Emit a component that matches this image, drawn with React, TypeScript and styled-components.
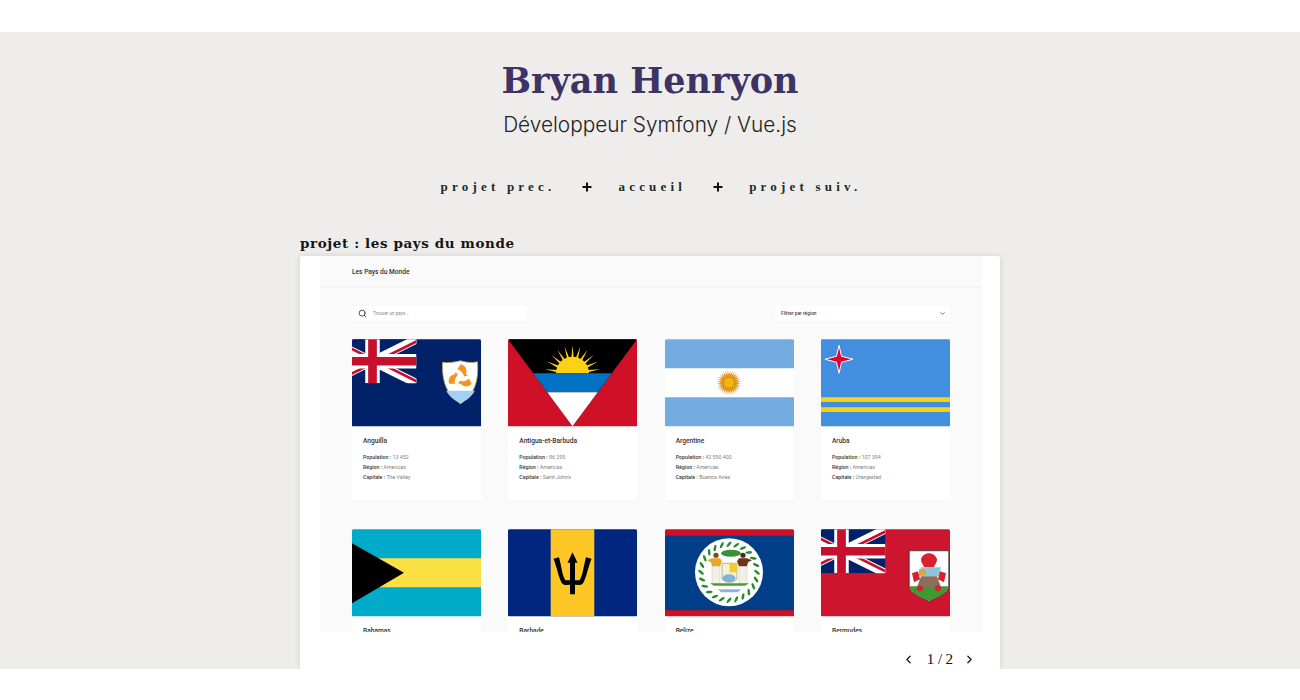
import React from "react";
import styled, { createGlobalStyle } from "styled-components";
import { Search, ChevronDown, ChevronLeft, ChevronRight } from "lucide-react";

const Global = createGlobalStyle`
  html, body { margin: 0; padding: 0; background: #fff; height: 700px; overflow: hidden; }
  * { box-sizing: border-box; }
`;

const Page = styled.main`
  margin-top: 32px;
  height: 637px;
  background: #efedec;
  overflow: hidden;
  display: flex;
  flex-direction: column;
  align-items: center;
`;
const Title = styled.h1`
  margin: 26px 0 0;
  font: 700 35px/46px "DejaVu Serif", serif;
  color: #3d3364;
`;
const Subtitle = styled.h2`
  margin: 7px 0 0;
  font: 300 20.8px/28px Inter, sans-serif;
  color: #222;
`;
const Nav = styled.nav`
  margin-top: 38px;
  padding-left: 3px;
  display: flex;
  align-items: center;
  gap: 26px;
  height: 20px;
`;
const NavLink = styled.a`
  font: 700 13px/20px "Liberation Serif", serif;
  letter-spacing: 4.2px;
  color: #1d2a26;
  margin-right: 1px;
`;
const Plus = styled.span`
  width: 10px;
  height: 10px;
  color: #111;
  display: block;
`;
const Section = styled.section`
  width: 700px;
  margin-top: 36px;
  flex: 1;
  display: flex;
  flex-direction: column;
`;
const SectionTitle = styled.h3`
  margin: 0;
  font: 700 13.5px/20px "DejaVu Serif", serif;
  letter-spacing: 0.6px;
  color: #151515;
  white-space: nowrap;
  height: 23px;
`;
const Slide = styled.div`
  flex: 1;
  background: #fff;
  border-radius: 2px;
  box-shadow: 0 0 6px rgba(0, 0, 0, 0.12);
  padding-left: 20px;
  display: flex;
  flex-direction: column;
  min-height: 0;
`;
const Shot = styled.div`
  width: 662px;
  height: 376px;
  background: #fafafa;
  overflow: hidden;
  font-family: Roboto, sans-serif;
`;
const ShotHeader = styled.header`
  height: 32px;
  padding: 2px 32px 0;
  border-bottom: 2px solid #f4f4f4;
  display: flex;
  align-items: center;
  font: 500 6.6px/1 Roboto, sans-serif;
  color: #333;
`;
const Controls = styled.div`
  display: flex;
  justify-content: space-between;
  padding: 18px 32px 0;
`;
const Field = styled.div`
  width: 175px;
  height: 15px;
  background: #fff;
  display: flex;
  align-items: center;
  box-shadow: 0 1px 2px rgba(0, 0, 0, 0.02);
`;
const SearchBox = styled(Field)`
  padding-left: 6px;
  gap: 6px;
  color: #444;
  font: 400 4.6px/1 Roboto, sans-serif;
  & > span { color: #8a8a8a; padding-top: 1.5px; }
`;
const SelectBox = styled(Field)`
  padding: 0 4px 0 6px;
  justify-content: space-between;
  color: #444;
  font: 500 4.8px/1 Roboto, sans-serif;
  & > span { padding-top: 1.5px; }
`;
const Grid = styled.div`
  display: grid;
  grid-template-columns: repeat(4, 129px);
  justify-content: space-between;
  row-gap: 29px;
  padding: 18px 32px 0;
`;
const Card = styled.article`
  height: 161px;
  background: #fff;
  box-shadow: 0 1px 2px rgba(0, 0, 0, 0.02);
`;
const FlagBox = styled.svg`
  display: block;
  width: 129px;
  height: 87.5px;
  border-radius: 1.5px;
`;
const CardBody = styled.div`
  padding: 10px 11px 0;
`;
const CardName = styled.h4`
  margin: 0 0 6px;
  font: 500 6.6px/9px Roboto, sans-serif;
  color: #333;
`;
const Line = styled.p`
  margin: 0;
  font: 400 5.3px/10.1px Roboto, sans-serif;
  color: #808080;
  & > b { font-weight: 500; color: #3a3a3a; }
`;
const Pager = styled.div`
  height: 37px;
  display: flex;
  align-items: center;
  justify-content: flex-end;
  gap: 9px;
  padding-right: 24px;
  padding-top: 17px;
  color: #18213a;
`;
const PagerText = styled.span`
  font: 400 15px/20px "Liberation Serif", serif;
  letter-spacing: 0.9px;
  word-spacing: -2px;
  margin-left: 3px;
  color: #111;
`;

const UnionJack = () => (
  <svg x="0" y="0" width="64.5" height="44" viewBox="0 0 64.5 44">
    <rect width="64.5" height="44" fill="#012169" />
    <path d="M-24 0L64.500 44M64.500 0L-24 44" stroke="#fff" strokeWidth="8.500" />
    <path d="M-24 -2.200L64.500 42M64.500 2.200L-24 46.200" stroke="#c8102e" strokeWidth="2.600" />
    <path d="M20.500 0V44M-24 22H64.500" stroke="#fff" strokeWidth="14.500" />
    <path d="M20.500 0V44M-24 22H64.500" stroke="#c8102e" strokeWidth="8.700" />
  </svg>
);

const dolphin = "M0 -13C5 -12 7 -8 5.500 -3L7.500 -1.500 3.500 -1C2.500 -5 0 -7 -3 -8Z";

const Anguilla = () => (
  <FlagBox viewBox="0 0 129 87">
    <rect width="129" height="87" fill="#012169" />
    <UnionJack />
    <path d="M90.500 23C96 24 102 23 108.500 21.500 114 23 120 24 125.500 22.500 126.500 40 124 54 108.500 64.500 93 54 90 40 90.500 23Z" fill="#fff" stroke="#b9a84a" strokeWidth="0.800" />
    <path d="M94.200 51.500H122.800C120 57 115 61 108.500 64 102 61 97 57 94.200 51.500Z" fill="#a5d0f5" />
    <g fill="#f7941d" transform="translate(108.500 38)">
      <path d={dolphin} />
      <path d={dolphin} transform="rotate(120)" />
      <path d={dolphin} transform="rotate(240)" />
    </g>
  </FlagBox>
);

const sunRays = (cx: number, cy: number, inner: number, outer: number, n: number, start = 0, end = 360) => {
  const out: string[] = [];
  const step = (end - start) / n;
  for (let i = 0; i < n; i++) {
    const a = ((start + step * i) * Math.PI) / 180;
    const b = ((start + step * (i + 0.5)) * Math.PI) / 180;
    const c = ((start + step * (i + 1)) * Math.PI) / 180;
    out.push(
      `M${cx + inner * Math.cos(a)} ${cy + inner * Math.sin(a)}L${cx + outer * Math.cos(b)} ${cy + outer * Math.sin(b)}L${cx + inner * Math.cos(c)} ${cy + inner * Math.sin(c)}Z`
    );
  }
  return out.join("");
};

const Antigua = () => (
  <FlagBox viewBox="0 0 129 87">
    <rect width="129" height="87" fill="#ce1126" />
    <path d="M0 0H129L64.500 87Z" fill="#000" />
    <path d={sunRays(64.500, 34, 11, 28, 11, 180, 360)} fill="#fcd116" />
    <path d="M48 34a16.500 16.500 0 0 1 33 0Z" fill="#fcd116" />
    <path d="M25.200 34H103.800L89.700 53H39.300Z" fill="#0072c6" />
    <path d="M39.300 53H89.700L64.500 87Z" fill="#fff" />
  </FlagBox>
);

const Argentina = () => (
  <FlagBox viewBox="0 0 129 87">
    <rect width="129" height="87" fill="#74acdf" />
    <rect y="29" width="129" height="29" fill="#fff" />
    <path d={sunRays(64, 43.500, 7.500, 12.500, 32)} fill="#d98a1f" />
    <circle cx="64" cy="43.500" r="8.500" fill="#e59b1c" />
    <circle cx="64" cy="43.500" r="5.500" fill="#f6b40e" stroke="#b8730e" strokeWidth="0.600" />
  </FlagBox>
);

const Aruba = () => (
  <FlagBox viewBox="0 0 129 87">
    <rect width="129" height="87" fill="#418fde" />
    <rect y="58" width="129" height="4.700" fill="#fbd116" />
    <rect y="68" width="129" height="4.700" fill="#fbd116" />
    <path d="M18 6L20.500 17 32 20 20.500 23 18 34 15.500 23 4 20 15.500 17Z" fill="#e4002b" stroke="#fff" strokeWidth="1" />
  </FlagBox>
);

const Bahamas = () => (
  <FlagBox viewBox="0 0 129 87">
    <rect width="129" height="87" fill="#00abc9" />
    <rect y="29" width="129" height="29" fill="#fae042" />
    <path d="M0 14L52 43.500 0 74Z" fill="#000" />
  </FlagBox>
);

const Barbados = () => (
  <FlagBox viewBox="0 0 129 87">
    <rect width="129" height="87" fill="#00267f" />
    <rect x="42.700" width="43.600" height="87" fill="#ffc726" />
    <path
      d="M64.500 23L69.500 33.500H67V51H71.500C75 46 75 39 78 28L83.500 29.500C79.500 40 78.500 48 75 54 73 57 70 55 67 55.500V65H62V55.500C59 55 56 57 54 54 50.500 48 49.500 40 45.500 29.500L51 28C54 39 54 46 57.500 51H62V33.500H59.500Z"
      fill="#000"
    />
  </FlagBox>
);

const leaves = Array.from({ length: 24 }, (_, i) => (i / 24) * 2 * Math.PI);

const Belize = () => (
  <FlagBox viewBox="0 0 129 87">
    <rect width="129" height="87" fill="#ce1126" />
    <rect y="6.500" width="129" height="74.500" fill="#003f87" />
    <circle cx="64" cy="43" r="34" fill="#fff" />
    <g fill="#2a8a2e">
      {leaves.map((a) => (
        <ellipse
          key={a}
          cx={64 + 28 * Math.cos(a)}
          cy={43 + 28 * Math.sin(a)}
          rx="3.400"
          ry="1.300"
          transform={`rotate(${(a * 180) / Math.PI + 40} ${64 + 28 * Math.cos(a)} ${43 + 28 * Math.sin(a)})`}
        />
      ))}
    </g>
    <ellipse cx="66" cy="24" rx="10" ry="3.500" fill="#3a8f3a" />
    <rect x="47" y="36" width="8" height="19" fill="#f2efe4" stroke="#bbb" strokeWidth="0.400" />
    <rect x="74" y="36" width="8" height="19" fill="#f2efe4" stroke="#bbb" strokeWidth="0.400" />
    <circle cx="51" cy="26" r="2.600" fill="#7a4a1c" />
    <circle cx="78" cy="26" r="2.600" fill="#4a2a12" />
    <path d="M42 31L47 29H55L57 32 55 37H47L46 33Z" fill="#e6a92a" />
    <path d="M87 31L82 29H74L72 32 74 37H82L83 33Z" fill="#6a3518" />
    <path d="M57 34H72V50C69 54 60 54 57 50Z" fill="#f4f0d8" stroke="#8a6a2a" strokeWidth="0.500" />
    <path d="M64.500 34H72V43H64.500Z" fill="#f4c92e" />
    <ellipse cx="64" cy="49" rx="6.500" ry="4" fill="#7fb4d8" />
    <path d="M45 54H84L80 56.500H49Z" fill="#4c9a35" />
    <path d="M53 60H76L73 63H56Z" fill="#8fb4d9" />
  </FlagBox>
);

const Bermuda = () => (
  <FlagBox viewBox="0 0 129 87">
    <rect width="129" height="87" fill="#ce1530" />
    <UnionJack />
    <path d="M88.200 21.500H127.800V57C127.500 64 114 69 108 72 102 69 88.500 64 88.200 57Z" fill="#fff" stroke="#333" strokeWidth="0.800" />
    <path d="M88.600 57H127.400C127 64 114 69 108 71.500 102 69 89 64 88.600 57Z" fill="#3c9a2e" />
    <path d="M100 30c1-4 5-6 8-6s7 2 8 6c0 4-3 6-3 8h-10c0-2-3-4-3-8z" fill="#d8202f" />
    <path d="M100 38H120L118 47H98Z" fill="#8ec5dc" />
    <path d="M98 40H105V46H98Z" fill="#d7a93a" />
    <path d="M100 47H116L120 58H96Z" fill="#8a705c" />
    <path d="M91 44L97 42 99 50 93 53Z" fill="#d8202f" />
    <path d="M125 44L119 42 117 50 123 53Z" fill="#d8202f" />
    <circle cx="99" cy="59" r="3" fill="#d8202f" />
    <circle cx="117" cy="59" r="3" fill="#d8202f" />
  </FlagBox>
);

const countries = [
  { name: "Anguilla", pop: "13 452", cap: "The Valley", Flag: Anguilla },
  { name: "Antigua-et-Barbuda", pop: "86 295", cap: "Saint John's", Flag: Antigua },
  { name: "Argentine", pop: "43 590 400", cap: "Buenos Aires", Flag: Argentina },
  { name: "Aruba", pop: "107 394", cap: "Oranjestad", Flag: Aruba },
  { name: "Bahamas", pop: "", cap: "", Flag: Bahamas },
  { name: "Barbade", pop: "", cap: "", Flag: Barbados },
  { name: "Belize", pop: "", cap: "", Flag: Belize },
  { name: "Bermudes", pop: "", cap: "", Flag: Bermuda },
];

export default function App() {
  return (
    <>
      <Global />
      <Page>
        <Title>Bryan Henryon</Title>
        <Subtitle>Développeur Symfony / Vue.js</Subtitle>
        <Nav>
          <NavLink>projet prec.</NavLink>
          <Plus as="svg" viewBox="0 0 10 10">
            <path d="M5 0.500V9.500M0.500 5H9.500" stroke="currentColor" strokeWidth="2" />
          </Plus>
          <NavLink>accueil</NavLink>
          <Plus as="svg" viewBox="0 0 10 10">
            <path d="M5 0.500V9.500M0.500 5H9.500" stroke="currentColor" strokeWidth="2" />
          </Plus>
          <NavLink>projet suiv.</NavLink>
        </Nav>
        <Section>
          <SectionTitle>projet : les pays du monde</SectionTitle>
          <Slide>
            <Shot>
              <ShotHeader>Les Pays du Monde</ShotHeader>
              <Controls>
                <SearchBox>
                  <Search size={9} strokeWidth={2.5} />
                  <span>Trouver un pays...</span>
                </SearchBox>
                <SelectBox>
                  <span>Filtrer par région</span>
                  <ChevronDown size={7} strokeWidth={2.5} />
                </SelectBox>
              </Controls>
              <Grid>
                {countries.map(({ name, pop, cap, Flag }) => (
                  <Card key={name}>
                    <Flag />
                    <CardBody>
                      <CardName>{name}</CardName>
                      {pop && (
                        <>
                          <Line><b>Population :</b> {pop}</Line>
                          <Line><b>Région :</b> Americas</Line>
                          <Line><b>Capitale :</b> {cap}</Line>
                        </>
                      )}
                    </CardBody>
                  </Card>
                ))}
              </Grid>
            </Shot>
            <Pager>
              <ChevronLeft size={13} strokeWidth={2.5} />
              <PagerText>1 / 2</PagerText>
              <ChevronRight size={13} strokeWidth={2.5} />
            </Pager>
          </Slide>
        </Section>
      </Page>
    </>
  );
}
